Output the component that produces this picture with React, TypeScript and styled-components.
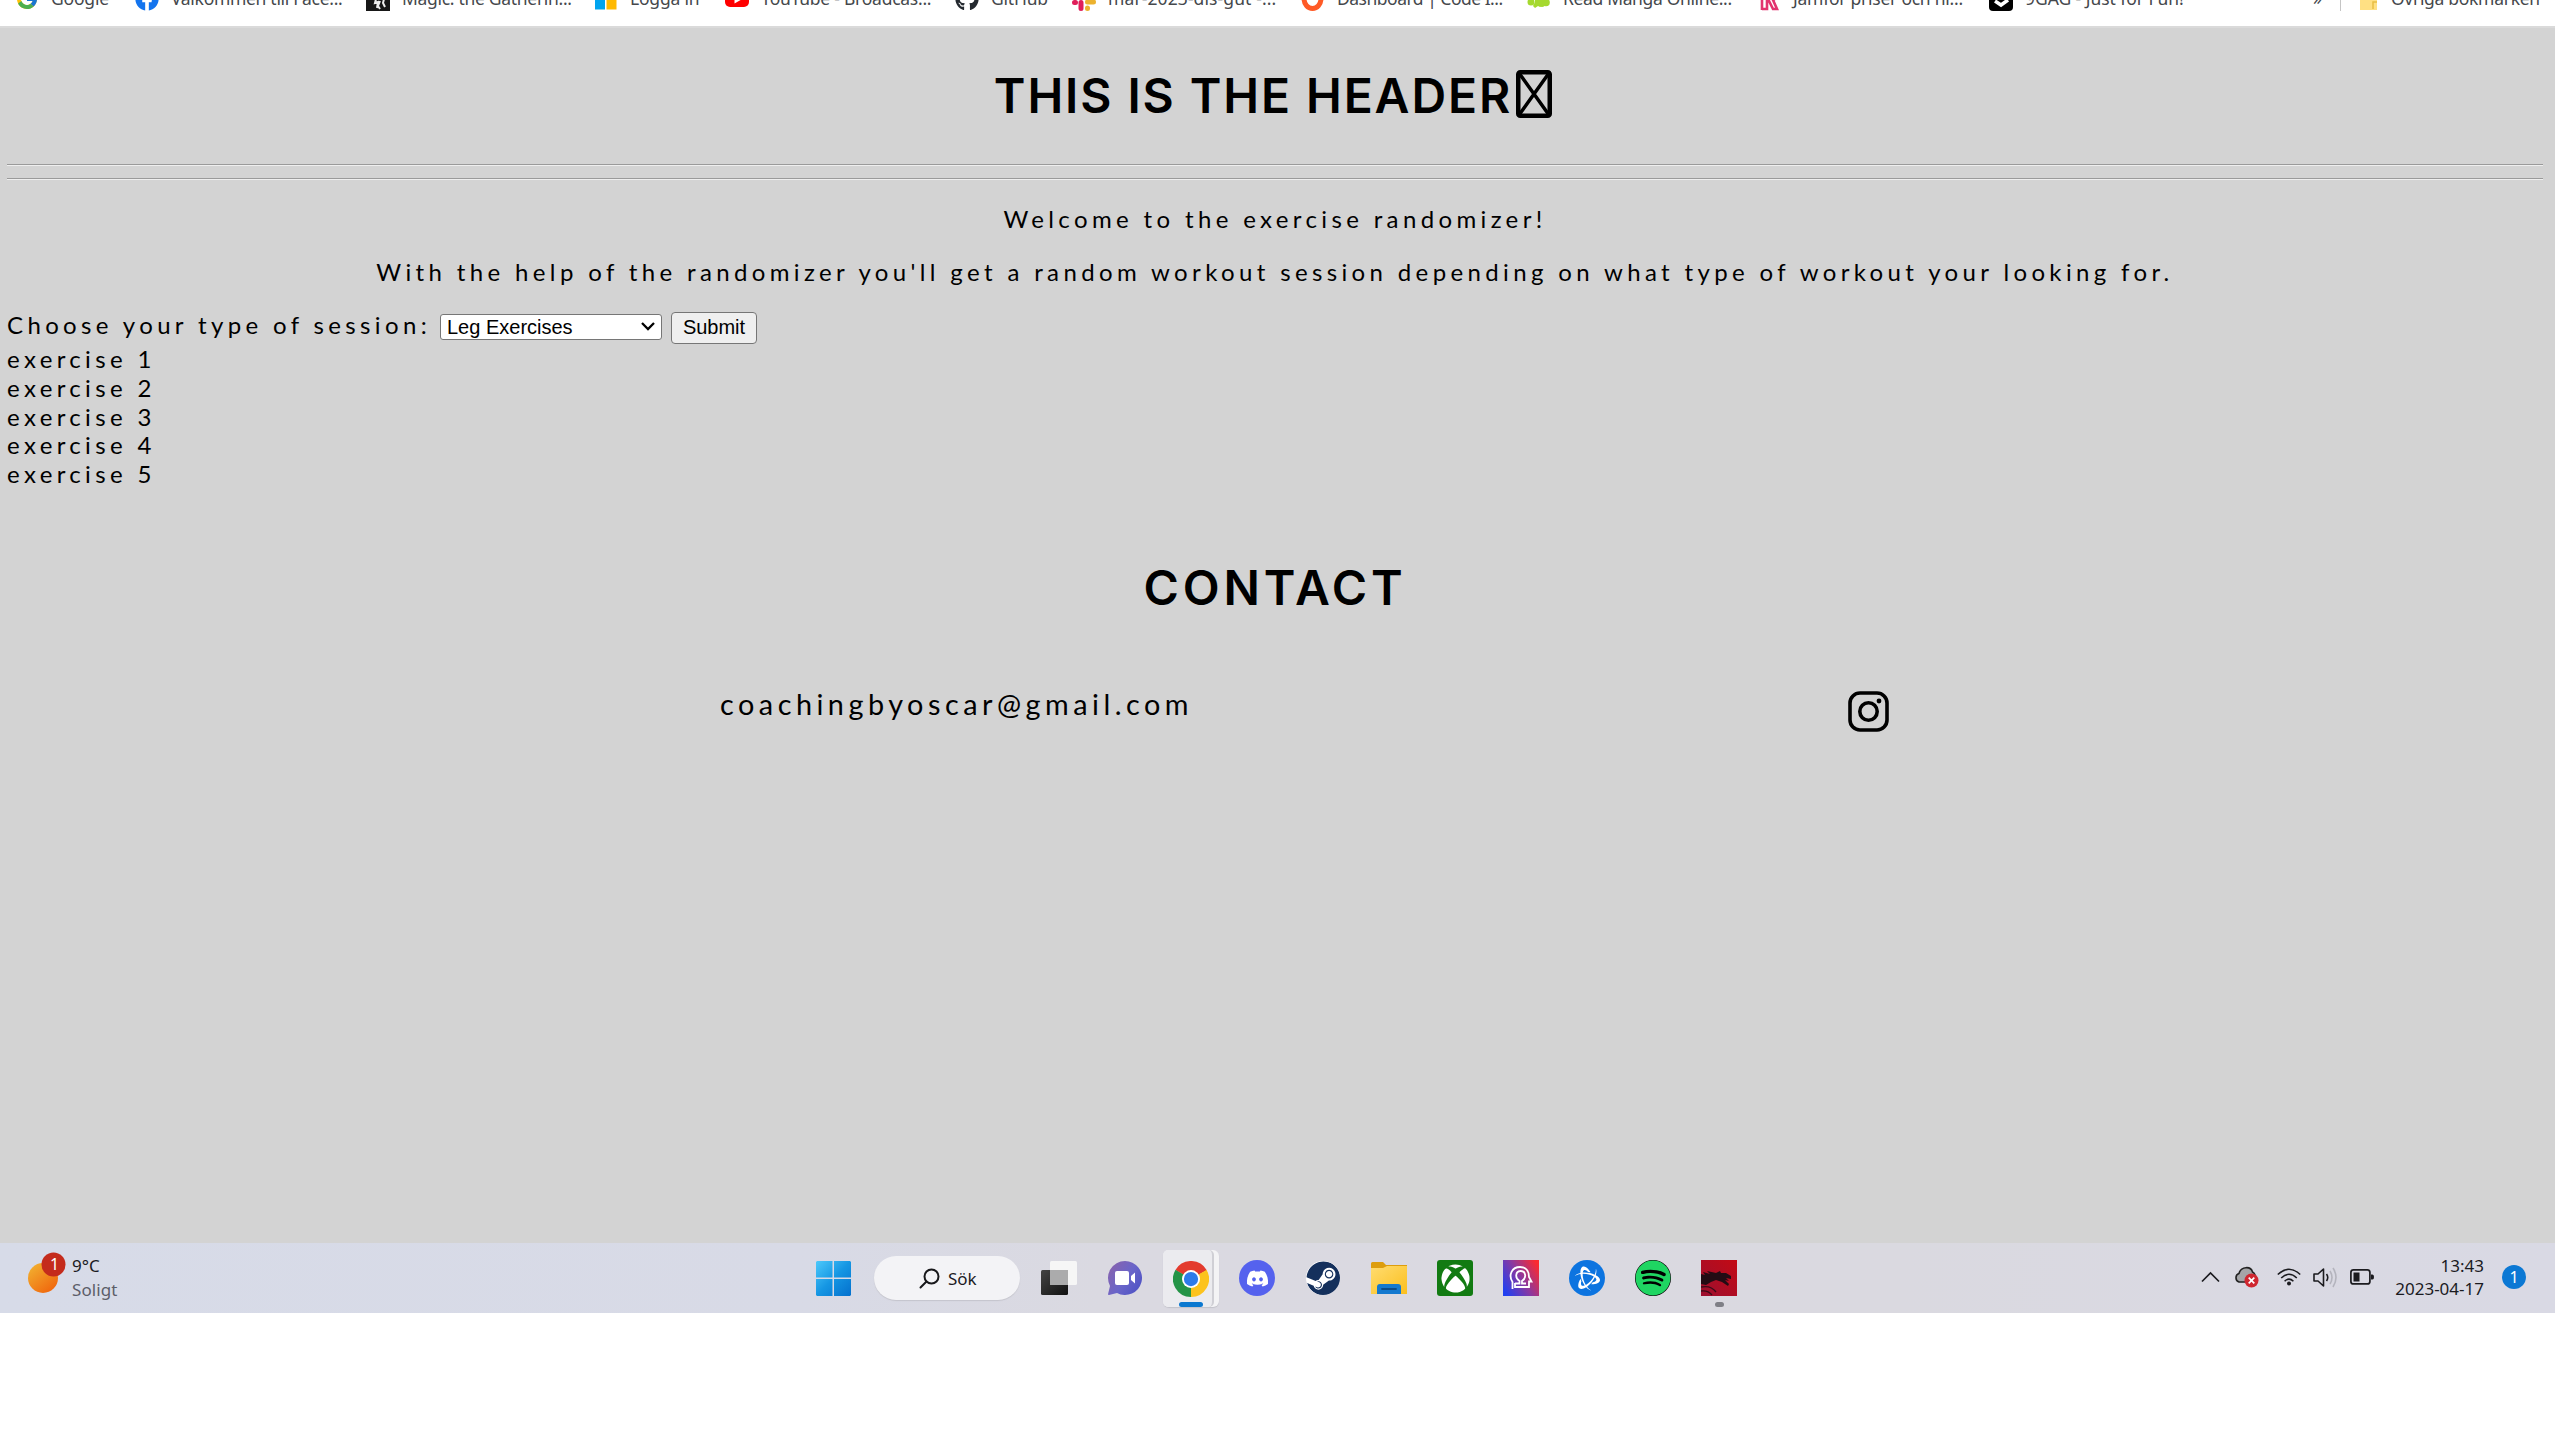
import React from "react";
import styled, { createGlobalStyle } from "styled-components";
import { FcGoogle } from "react-icons/fc";
import { FaDiscord, FaFacebook, FaGithub, FaSteam, FaXbox, FaSpotify } from "react-icons/fa";
import { SiBattledotnet } from "react-icons/si";

const GlobalStyle = createGlobalStyle`
  body { margin: 0; background: #fff; overflow: hidden; }
  * { box-sizing: border-box; }
  svg { display: block; flex: none; }
`;

const UI_FONT = `"Noto Sans", "Open Sans", sans-serif`;

const Screen = styled.div`
  width: 2560px;
  height: 1440px;
  background: #fff;
  padding-right: 5px;
  display: flex;
  flex-direction: column;
`;

/* ---------- bookmarks ---------- */
const BookmarkBar = styled.nav`
  height: 26px;
  flex: none;
  overflow: hidden;
  display: flex;
  align-items: flex-start;
  padding-left: 15px;
  font-family: ${UI_FONT};
  color: #45484c;
`;
const Bookmark = styled.div<{ $w: number }>`
  width: ${(p) => p.$w}px;
  flex: none;
  height: 24px;
  margin-top: -13px;
  display: flex;
  align-items: center;
  gap: 12px;
`;
const BookmarkLabel = styled.span<{ $track: number }>`
  font-size: 17.5px;
  line-height: 22px;
  padding-bottom: 2px;
  white-space: nowrap;
  letter-spacing: ${(p) => p.$track}px;
`;
const BarDivider = styled.i`
  width: 1px;
  height: 11px;
  background: #c5c5c5;
  margin-right: 18px;
`;

/* ---------- page ---------- */
const Page = styled.main`
  height: 1217px;
  flex: none;
  background: #d3d3d3;
  border-top: 2px solid #dadada;
  padding: 0 12px 0 7px;
  font-family: Lato, sans-serif;
  font-size: 24px;
  line-height: 28.8px;
  letter-spacing: 4.36px;
  color: #000;
`;
const Heading = styled.h1<{ $top: number; $track: number }>`
  margin: 0;
  padding-top: ${(p) => p.$top}px;
  display: flex;
  justify-content: center;
  font-family: Inter, sans-serif;
  font-size: 48px;
  line-height: 60px;
  font-weight: 560;
  letter-spacing: ${(p) => p.$track}px;
`;
const MissingGlyph = styled.svg`
  margin: 4px 4px 0 4px;
`;
const Rule = styled.hr<{ $gap: number }>`
  margin: ${(p) => p.$gap}px 0 0;
  height: 2px;
  border: 0;
  border-top: 1px solid #9a9a9a;
  border-bottom: 1px solid #eee;
`;
const Intro = styled.section`
  padding-top: 25px;
  text-align: center;
`;
const Paragraph = styled.p`
  margin: 0 0 24px;
`;
const SessionForm = styled.form`
  height: 34px;
  display: flex;
  align-items: flex-start;
`;
const FormLabel = styled.label`
  width: 433px;
  white-space: nowrap;
`;
const SelectBox = styled.div`
  width: 222px;
  height: 26px;
  margin-top: 3px;
  padding: 0 6px;
  display: flex;
  align-items: center;
  justify-content: space-between;
  background: #fff;
  border: 1px solid #767676;
  border-radius: 3px;
  font: 20px/24px "Liberation Sans", sans-serif;
  letter-spacing: 0;
`;
const SubmitButton = styled.button`
  width: 86px;
  height: 32px;
  margin: 1px 0 0 9px;
  padding: 0 0 1px;
  background: #efefef;
  border: 1.5px solid #767676;
  border-radius: 4px;
  font: 20px/26px "Liberation Sans", sans-serif;
  color: #000;
`;
const ExerciseList = styled.ul`
  list-style: none;
  margin: 0;
  padding: 0.5px 0 0;
`;
const ContactRow = styled.section`
  display: flex;
  justify-content: space-between;
  padding: 69px 654px 0 713px;
  font-size: 28.8px;
  line-height: 35px;
  letter-spacing: 4.5px;
`;
const InstagramLink = styled.a`
  margin-top: 4px;
`;

/* ---------- taskbar ---------- */
const Taskbar = styled.footer`
  height: 70px;
  flex: none;
  display: flex;
  align-items: center;
  background: linear-gradient(90deg, #d7dbe8 0, #d8dae6 800px, #dad9e1 1100px, #dad9e0 1900px, #d9d9e4 2555px);
  font-family: ${UI_FONT};
  font-size: 17px;
  color: #1b1b1f;
`;
const Weather = styled.div`
  width: 800px;
  height: 70px;
  padding: 9px 0 0 28px;
  display: flex;
  gap: 6px;
`;
const WeatherText = styled.div`
  padding-top: 2px;
  line-height: 24px;
`;
const Muted = styled.div`
  color: #5c5e69;
  letter-spacing: 0.1px;
`;
const Slot = styled.div`
  width: 66px;
  height: 70px;
  display: flex;
  align-items: center;
  justify-content: center;
`;
const Search = styled.div`
  width: 146px;
  height: 44px;
  margin: 0 6px 0 8px;
  padding-left: 45px;
  display: flex;
  align-items: center;
  gap: 8px;
  border-radius: 22px;
  background: #f3f3f6;
  box-shadow: 0 1px 1px #c4c4cc;
`;
const ActiveStack = styled.div`
  width: 56px;
  height: 57px;
  padding-right: 5px;
  border-radius: 6px;
  background: #f3f3f5;
  box-shadow: 0 1px 1px #c2c2ca;
`;
const ActiveTile = styled.div`
  width: 51px;
  height: 57px;
  padding: 11px 0 0 7px;
  display: flex;
  flex-direction: column;
  align-items: center;
  justify-content: space-between;
  border-radius: 5px;
  background: #ebebef;
  border-right: 2px solid #cfcfd5;
`;
const Indicator = styled.i<{ $w: number; $color: string }>`
  display: block;
  width: ${(p) => p.$w}px;
  height: 5px;
  border-radius: 3px;
  background: ${(p) => p.$color};
`;
const RunningApp = styled.div`
  display: flex;
  flex-direction: column;
  align-items: center;
  gap: 6px;
  padding-top: 11px;
`;
const Disc = styled.div<{ $bg: string; $size?: number; $radius?: string }>`
  width: ${(p) => p.$size ?? 36}px;
  height: ${(p) => p.$size ?? 36}px;
  border-radius: ${(p) => p.$radius ?? "50%"};
  background: ${(p) => p.$bg};
  color: #fff;
  display: flex;
  align-items: center;
  justify-content: center;
  overflow: hidden;
`;
const Tray = styled.div`
  flex: 1;
  height: 72px;
  margin-top: -2px;
  padding-left: 449px;
  display: flex;
  align-items: center;
`;
const TrayGlyphs = styled.div`
  width: 171px;
  display: flex;
  gap: 12px;
  align-items: center;
`;
const TrayStatus = styled.span<{ $after: number }>`
  margin-right: ${(p) => p.$after}px;
`;
const Clock = styled.div`
  width: 112px;
  text-align: right;
  line-height: 23px;
  white-space: nowrap;
`;
const Count = styled.div`
  width: 24px;
  height: 24px;
  margin-left: 18px;
  border-radius: 50%;
  background: #0b78d4;
  color: #fff;
  font-size: 16px;
  line-height: 24px;
  text-align: center;
`;

/* ---------- drawings ---------- */
const CardIcon = () => (
  <svg width="24" height="24" viewBox="0 0 24 24">
    <rect width="24" height="24" fill="#171717" />
    <path d="M7 9l3 3-1 4 3-1-1 6M13 9l5 3-1 4 2 4M14 14l-2 5 2 3" stroke="#eee" strokeWidth="2" fill="none" />
  </svg>
);
const MsIcon = () => (
  <svg width="24" height="24" viewBox="0 0 24 24">
    <path fill="#f25022" d="M1 1h10v10H1z" />
    <path fill="#7fba00" d="M13 1h10v10H13z" />
    <path fill="#00a4ef" d="M1 12.500h10v10H1z" />
    <path fill="#ffb900" d="M12.500 12.500h10v10h-10z" />
  </svg>
);
const YoutubeIcon = () => (
  <svg width="24" height="24" viewBox="0 0 24 24">
    <rect y="3" width="24" height="17" rx="5" fill="#f00" />
    <path d="M9.500 8.500v8l7-4z" fill="#fff" />
  </svg>
);
const SlackIcon = () => (
  <svg width="24" height="24" viewBox="0 0 24 24" strokeWidth="5" strokeLinecap="round">
    <path d="M9 3v6" stroke="#36c5f0" />
    <path d="M21 9h-6" stroke="#2eb67d" />
    <path d="M9 15.500v6M2.500 15.500h1" stroke="#e01e5a" />
    <path d="M15.500 15h6M15.500 21v.5" stroke="#ecb22e" />
  </svg>
);
const RingIcon = () => (
  <svg width="24" height="24" viewBox="0 0 24 24">
    <ellipse cx="11.500" cy="11.500" rx="8.500" ry="10" fill="none" stroke="#ff5a26" strokeWidth="5" />
  </svg>
);
const MangaIcon = () => (
  <svg width="24" height="24" viewBox="0 0 24 24" fill="#a5d92f">
    <circle cx="4" cy="15" r="3.500" />
    <circle cx="19" cy="15.500" r="3.800" />
    <path d="M8 8h8v10l-3 2-2-1-3 2-2-2 2-4z" />
    <circle cx="15" cy="17" r="3" />
  </svg>
);
const PriceIcon = () => (
  <svg width="22" height="24" viewBox="0 0 22 24">
    <path d="M3 23V4h8c8 0 7 8 3 9l4 9h-4l-4-8H8v8H3" fill="none" stroke="#e2336f" strokeWidth="2.600" />
  </svg>
);
const GagIcon = () => (
  <svg width="24" height="24" viewBox="0 0 24 24">
    <rect width="24" height="24" rx="4" fill="#000" />
    <path d="M6 14l6 4 7-5" fill="none" stroke="#fff" strokeWidth="3.500" />
  </svg>
);
const BookmarkFolder = () => (
  <svg width="20" height="24" viewBox="0 0 20 24">
    <path d="M1 2h17v21H1z" fill="#ffe083" />
    <path d="M14 22V15h4" stroke="#e8bd45" fill="none" strokeWidth="1.500" />
  </svg>
);
const WeatherIcon = () => (
  <svg width="38" height="44" viewBox="0 0 38 44">
    <defs>
      <linearGradient id="sun" x1="0" y1="0" x2=".8" y2="1">
        <stop offset="0" stopColor="#f2b733" />
        <stop offset="1" stopColor="#f0640c" />
      </linearGradient>
    </defs>
    <circle cx="15" cy="26" r="15" fill="url(#sun)" />
    <circle cx="25.500" cy="12.500" r="12" fill="#c42b1c" />
    <text x="26.500" y="18" fontFamily="Noto Sans" fontSize="16" fill="#fff" textAnchor="middle">1</text>
  </svg>
);
const WindowsIcon = () => (
  <svg width="35" height="35" viewBox="0 0 35 35">
    <defs>
      <linearGradient id="win" x1="0" y1="0" x2="1" y2="1">
        <stop offset="0" stopColor="#4cc9fb" />
        <stop offset=".5" stopColor="#1596e3" />
        <stop offset="1" stopColor="#0470cd" />
      </linearGradient>
    </defs>
    <path fill="url(#win)" d="M1 0h15.500v16.500H0V1zM18 0h16l1 1v15.500H18zM0 18h16.500v17H1l-1-1zM18 18h17v16l-1 1H18z" />
  </svg>
);
const SearchIcon = () => (
  <svg width="21" height="21" viewBox="0 0 21 21" fill="none" stroke="#18181b" strokeWidth="2">
    <circle cx="12.500" cy="8.500" r="7" />
    <path d="M7.500 13.500L1.500 19.500" strokeLinecap="round" />
  </svg>
);
const TaskViewIcon = () => (
  <svg width="36" height="34" viewBox="0 0 36 34">
    <defs>
      <linearGradient id="tv" x1="0" y1="0" x2="1" y2="1">
        <stop offset="0" stopColor="#444" />
        <stop offset="1" stopColor="#111" />
      </linearGradient>
    </defs>
    <rect y="9" width="27" height="25" rx="1.500" fill="url(#tv)" />
    <rect x="9" width="27" height="24" rx="1.500" fill="#f6f6f6" />
    <path d="M9 9h18v15H10l-1-1z" fill="#ababac" />
  </svg>
);
const ChatIcon = () => (
  <svg width="36" height="36" viewBox="0 0 36 36">
    <defs>
      <linearGradient id="chat" x1="0" y1=".2" x2="1" y2=".9">
        <stop offset="0" stopColor="#8763ae" />
        <stop offset=".5" stopColor="#6a65c9" />
        <stop offset="1" stopColor="#4a50c4" />
      </linearGradient>
    </defs>
    <path d="M18 1a17 17 0 1 1-8 32L2 35c-1 0-1-.6-.8-1.400L3 26A17 17 0 0 1 18 1z" fill="url(#chat)" />
    <rect x="8" y="11" width="14" height="14" rx="2" fill="#fff" />
    <path d="M24 16l4-3.500v11L24 20z" fill="#fff" />
  </svg>
);
const ChromeIcon = () => (
  <svg width="36" height="36" viewBox="0 0 48 48">
    <path d="M24 24L3.200 12A24 24 0 0 1 44.800 12z" fill="#e33b2e" />
    <path d="M24 24L44.800 12A24 24 0 0 1 24 48z" fill="#fcc31e" />
    <path d="M24 24L24 48A24 24 0 0 1 3.200 12z" fill="#249447" />
    <path d="M3.200 12L13.600 30 24 24z" fill="#249447" />
    <path d="M24 48L34.400 30 24 24z" fill="#fcc31e" />
    <path d="M44.800 12H24v12z" fill="#e33b2e" />
    <path d="M44.800 12L34 18l4 8 8-8z" fill="#fcc31e" />
    <circle cx="24" cy="24" r="12" fill="#fff" />
    <circle cx="24" cy="24" r="9.500" fill="#2d7bea" />
  </svg>
);
const FolderIcon = () => (
  <svg width="36" height="33" viewBox="0 0 36 33">
    <defs>
      <linearGradient id="fold" x1="0" y1="0" x2="1" y2="1">
        <stop offset="0" stopColor="#ffdc70" />
        <stop offset="1" stopColor="#fbbf1e" />
      </linearGradient>
    </defs>
    <path d="M0 1.500Q0 0 1.500 0H12l3 3h21v6H0z" fill="#dd9d0c" />
    <path d="M0 6h12l4-2h20v28H0z" fill="url(#fold)" />
    <path d="M6 32v-7q0-3 3-3h18q3 0 3 3v7z" fill="#1479cf" />
    <path d="M11 27h14" stroke="#0a4c8c" strokeWidth="1.800" strokeLinecap="round" />
  </svg>
);
const HeadIcon = () => (
  <svg width="36" height="36" viewBox="0 0 36 36">
    <defs>
      <linearGradient id="head" x1="0" y1=".8" x2="1" y2=".2">
        <stop offset="0" stopColor="#2140f0" />
        <stop offset=".5" stopColor="#8a38a0" />
        <stop offset="1" stopColor="#fb2a30" />
      </linearGradient>
    </defs>
    <rect width="36" height="36" fill="url(#head)" />
    <path d="M9.500 29v-7C5 15 9 7 17 7c6 0 9 4 9 10l2.500 4.500H26V27H12v-4" fill="none" stroke="#fff" strokeWidth="1.800" />
    <path d="M12 23.500h4.500V21c-5-3-4-10 1.200-10s6.200 7 1.300 10v2.500h4" fill="none" stroke="#fff" strokeWidth="1.800" />
  </svg>
);
const DragonIcon = () => (
  <svg width="36" height="36" viewBox="0 0 36 36">
    <defs>
      <linearGradient id="drg" x1="0" y1="1" x2="1" y2="0">
        <stop offset="0" stopColor="#9c1030" />
        <stop offset="1" stopColor="#c30a14" />
      </linearGradient>
    </defs>
    <rect width="36" height="36" fill="url(#drg)" />
    <path d="M0 14l4 1-2-3 7 2-3-3 9 2 4-2 1 2 5 0 5 3 0 3-5-1 3 3-4-1 4 4-1 2-6-4-6-2-5 2-5 3-5-1z" fill="#230c14" />
    <path d="M0 27q10-2 15 5M0 31q7-1 11 4" stroke="#3a0c18" strokeWidth="1.300" fill="none" />
  </svg>
);
const ChevronIcon = () => (
  <svg width="19" height="12" viewBox="0 0 19 12" fill="none" stroke="#1b1b1f" strokeWidth="1.700">
    <path d="M1 10.500L9.500 2 18 10.500" />
  </svg>
);
const CloudIcon = () => (
  <svg width="25" height="22" viewBox="0 0 25 22">
    <path d="M5 16a4.500 4.500 0 0 1 0-8.500C7 0 17 0 18.500 6q2 1 2.500 3L13 16z" fill="#a5a5a8" stroke="#222" strokeWidth="1.600" />
    <circle cx="17.500" cy="14.500" r="7" fill="#cf2730" />
    <path d="M14.700 11.700l5.600 5.600m0-5.600l-5.600 5.600" stroke="#fff" strokeWidth="1.700" />
  </svg>
);
const WifiIcon = () => (
  <svg width="24" height="18" viewBox="0 0 24 18" fill="none" stroke="#1b1b1f" strokeWidth="1.600">
    <path d="M.8 6.500Q12-4 23.200 6.500M4.200 10Q12 2.500 19.800 10M7.600 13.300Q12 9 16.400 13.300" />
    <circle cx="12" cy="15.500" r="1.200" fill="#1b1b1f" />
  </svg>
);
const VolumeIcon = () => (
  <svg width="25" height="21" viewBox="0 0 25 21" fill="none" stroke="#1b1b1f" strokeWidth="1.600">
    <path d="M1 7h4l5.500-5v17L5 14H1z" strokeLinejoin="round" />
    <path d="M13.500 7q2.500 3.500 0 7" />
    <path d="M17 4q4 6.500 0 13M20 1q6 9.500 0 19" stroke="#b4b4bd" />
  </svg>
);
const BatteryIcon = () => (
  <svg width="24" height="16" viewBox="0 0 24 16">
    <rect x=".9" y=".9" width="19" height="14" rx="2.500" fill="none" stroke="#1b1b1f" strokeWidth="1.700" />
    <rect x="3.500" y="3.500" width="6" height="9" fill="#1b1b1f" />
    <path d="M21 5.500h1.500q1.500 0 1.500 2.500t-1.500 2.500H21z" fill="#1b1b1f" />
  </svg>
);

const bookmarks: { icon: React.ReactNode; text: string; w: number; track: number }[] = [
  { icon: <FcGoogle size={24} />, text: "Google", w: 120, track: -0.2 },
  { icon: <FaFacebook size={24} color="#1374ee" />, text: "Välkommen till Face...", w: 231, track: -0.3 },
  { icon: <CardIcon />, text: "Magic: the Gatherin...", w: 228, track: -0.3 },
  { icon: <MsIcon />, text: "Logga in", w: 131, track: -0.2 },
  { icon: <YoutubeIcon />, text: "YouTube - Broadcas...", w: 230, track: -0.25 },
  { icon: <FaGithub size={24} color="#24292f" />, text: "GitHub", w: 117, track: -0.2 },
  { icon: <SlackIcon />, text: "mar-2023-dis-gut -...", w: 229, track: 0.1 },
  { icon: <RingIcon />, text: "Dashboard | Code I...", w: 226, track: -0.5 },
  { icon: <MangaIcon />, text: "Read Manga Online...", w: 232, track: -0.35 },
  { icon: <PriceIcon />, text: "Jämför priser och hi...", w: 230, track: -0.25 },
  { icon: <GagIcon />, text: "9GAG - Just for Fun!", w: 324, track: -0.05 },
  { icon: null, text: "»", w: 27, track: 0 },
];

const exercises = [1, 2, 3, 4, 5];

export default function App() {
  return (
    <Screen>
      <GlobalStyle />
      <BookmarkBar>
        {bookmarks.map((b) => (
          <Bookmark key={b.text} $w={b.w}>
            {b.icon}
            <BookmarkLabel $track={b.track}>{b.text}</BookmarkLabel>
          </Bookmark>
        ))}
        <BarDivider />
        <Bookmark $w={190}>
          <BookmarkFolder />
          <BookmarkLabel $track={-0.3}>Övriga bokmärken</BookmarkLabel>
        </Bookmark>
      </BookmarkBar>

      <Page>
        <Heading $top={38} $track={1.9}>
          THIS IS THE HEADER
          <MissingGlyph width="36" height="48" viewBox="0 0 36 48" fill="none" stroke="#000">
            <rect x="2.250" y="2.250" width="31.500" height="43.500" rx="2" strokeWidth="4.500" />
            <path d="M3 3l30 42M33 3L3 45" strokeWidth="3.500" />
          </MissingGlyph>
        </Heading>
        <Rule $gap={38} />
        <Rule $gap={12} />
        <Intro>
          <Paragraph>Welcome to the exercise randomizer!</Paragraph>
          <Paragraph>
            With the help of the randomizer you'll get a random workout session depending on what type of workout your
            looking for.
          </Paragraph>
        </Intro>
        <SessionForm>
          <FormLabel>Choose your type of session:</FormLabel>
          <SelectBox>
            Leg Exercises
            <svg width="14" height="9" viewBox="0 0 14 9" fill="none" stroke="#000" strokeWidth="2.300">
              <path d="M1 1l6 6 6-6" />
            </svg>
          </SelectBox>
          <SubmitButton type="button">Submit</SubmitButton>
        </SessionForm>
        <ExerciseList>
          {exercises.map((n) => (
            <li key={n}>exercise {n}</li>
          ))}
        </ExerciseList>
        <Heading $top={68.5} $track={3.8}>
          CONTACT
        </Heading>
        <ContactRow>
          <span>coachingbyoscar@gmail.com</span>
          <InstagramLink>
            <svg width="41" height="41" viewBox="0 0 41 41" fill="none" stroke="#000" strokeWidth="3.600">
              <rect x="2" y="2" width="37" height="37" rx="10" />
              <circle cx="20.500" cy="20.500" r="8.700" />
              <circle cx="31" cy="10" r="2.400" fill="#000" stroke="none" />
            </svg>
          </InstagramLink>
        </ContactRow>
      </Page>

      <Taskbar>
        <Weather>
          <WeatherIcon />
          <WeatherText>
            9°C
            <Muted>Soligt</Muted>
          </WeatherText>
        </Weather>
        <Slot><WindowsIcon /></Slot>
        <Search>
          <SearchIcon />
          Sök
        </Search>
        <Slot><TaskViewIcon /></Slot>
        <Slot><ChatIcon /></Slot>
        <Slot>
          <ActiveStack>
            <ActiveTile>
              <ChromeIcon />
              <Indicator $w={24} $color="#0b78d0" />
            </ActiveTile>
          </ActiveStack>
        </Slot>
        <Slot>
          <Disc $bg="#5562ee"><FaDiscord size={23} /></Disc>
        </Slot>
        <Slot>
          <Disc $bg="#fff" $size={34}><FaSteam size={35} color="#14305c" /></Disc>
        </Slot>
        <Slot><FolderIcon /></Slot>
        <Slot>
          <Disc $bg="#127b12" $radius="3px"><FaXbox size={29} /></Disc>
        </Slot>
        <Slot><HeadIcon /></Slot>
        <Slot>
          <Disc $bg="#0c74e0"><SiBattledotnet size={25} /></Disc>
        </Slot>
        <Slot>
          <Disc $bg="#000"><FaSpotify size={36} color="#1fd562" /></Disc>
        </Slot>
        <Slot>
          <RunningApp>
            <DragonIcon />
            <Indicator $w={9} $color="#7f7f86" />
          </RunningApp>
        </Slot>
        <Tray>
          <TrayGlyphs>
            <TrayStatus $after={2}><ChevronIcon /></TrayStatus>
            <TrayStatus $after={6}><CloudIcon /></TrayStatus>
            <WifiIcon />
            <VolumeIcon />
            <BatteryIcon />
          </TrayGlyphs>
          <Clock>
            13:43
            <div>2023-04-17</div>
          </Clock>
          <Count>1</Count>
        </Tray>
      </Taskbar>
    </Screen>
  );
}
